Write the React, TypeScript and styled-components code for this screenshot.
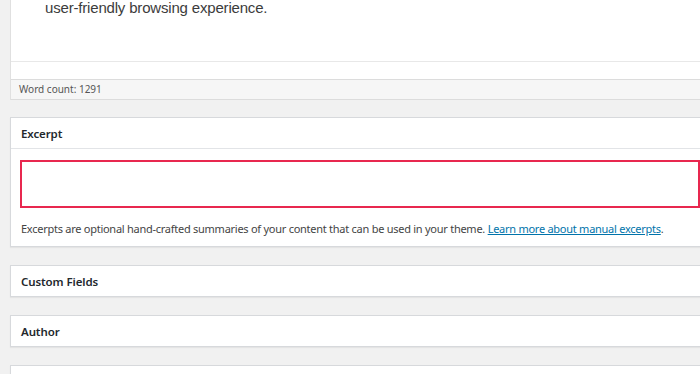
import styled, { createGlobalStyle } from 'styled-components';

const GlobalStyle = createGlobalStyle`
  html, body {
    margin: 0;
    padding: 0;
    background: #f1f1f1;
    overflow: hidden;
  }
  * {
    box-sizing: border-box;
  }
`;

const Column = styled.div`
  width: 740px;
  padding-left: 10px;
  display: flex;
  flex-direction: column;
  font-family: 'Noto Sans', 'Open Sans', sans-serif;
`;

const Editor = styled.div`
  background: #fff;
  border-left: 1px solid #e0e0e0;
  display: flex;
  flex-direction: column;
`;

const EditorContent = styled.div`
  height: 62px;
  overflow: hidden;
  display: flex;
  flex-direction: column;
  justify-content: flex-end;
  padding: 0 0 41px 34px;
  border-bottom: 1px solid #e8e8e8;
`;

const Paragraph = styled.p`
  margin: 0;
  font-family: 'Liberation Sans', Arial, sans-serif;
  font-size: 15px;
  letter-spacing: -0.18px;
  line-height: 24px;
  color: #3c3c3c;
`;

const EditorSpacer = styled.div`
  height: 17px;
`;

const StatusBar = styled.div`
  height: 21px;
  background: #f6f6f6;
  border-top: 1px solid #dcdcdc;
  border-bottom: 1px solid #dcdcdc;
  padding-left: 8px;
  font-size: 10px;
  line-height: 19px;
  color: #555;
`;

const Postbox = styled.section<{ $first?: boolean }>`
  margin-top: ${(p) => (p.$first ? '17px' : '18px')};
  background: #fff;
  border: 1px solid #d7d9dc;
  box-shadow: 0 1px 1px rgba(0, 0, 0, 0.05);
`;

const PostboxHeader = styled.h2<{ $open?: boolean }>`
  margin: 0;
  height: ${(p) => (p.$open ? '31px' : '30px')};
  padding-left: 10px;
  display: flex;
  align-items: center;
  font-size: 11.5px;
  letter-spacing: -0.1px;
  font-weight: 600;
  color: #23282d;
  border-bottom: ${(p) => (p.$open ? '1px solid #e2e4e7' : 'none')};
`;

const PostboxBody = styled.div`
  padding: 11px 0 8px 9px;
`;

const ExcerptInput = styled.textarea`
  display: block;
  width: 680px;
  height: 48px;
  border: 2px solid #e8284f;
  border-radius: 0;
  resize: none;
  outline: none;
  background: #fff;
`;

const Help = styled.p`
  margin: 11px 0 0 1px;
  font-size: 11px;
  letter-spacing: -0.26px;
  line-height: 19px;
  color: #444;
  white-space: nowrap;
`;

const HelpLink = styled.a`
  color: #0073aa;
  text-decoration: underline;
`;

export default function App() {
  return (
    <>
      <GlobalStyle />
      <Column>
        <Editor>
          <EditorContent>
            <Paragraph>user-friendly browsing experience.</Paragraph>
          </EditorContent>
          <EditorSpacer />
          <StatusBar>Word count: 1291</StatusBar>
        </Editor>

        <Postbox $first>
          <PostboxHeader $open>Excerpt</PostboxHeader>
          <PostboxBody>
            <ExcerptInput aria-label="Excerpt" />
            <Help>
              Excerpts are optional hand-crafted summaries of your content that can be used in your theme.{' '}
              <HelpLink href="#">Learn more about manual excerpts</HelpLink>.
            </Help>
          </PostboxBody>
        </Postbox>

        <Postbox>
          <PostboxHeader>Custom Fields</PostboxHeader>
        </Postbox>

        <Postbox>
          <PostboxHeader>Author</PostboxHeader>
        </Postbox>

        <Postbox>
          <PostboxHeader>Discussion</PostboxHeader>
        </Postbox>
      </Column>
    </>
  );
}
